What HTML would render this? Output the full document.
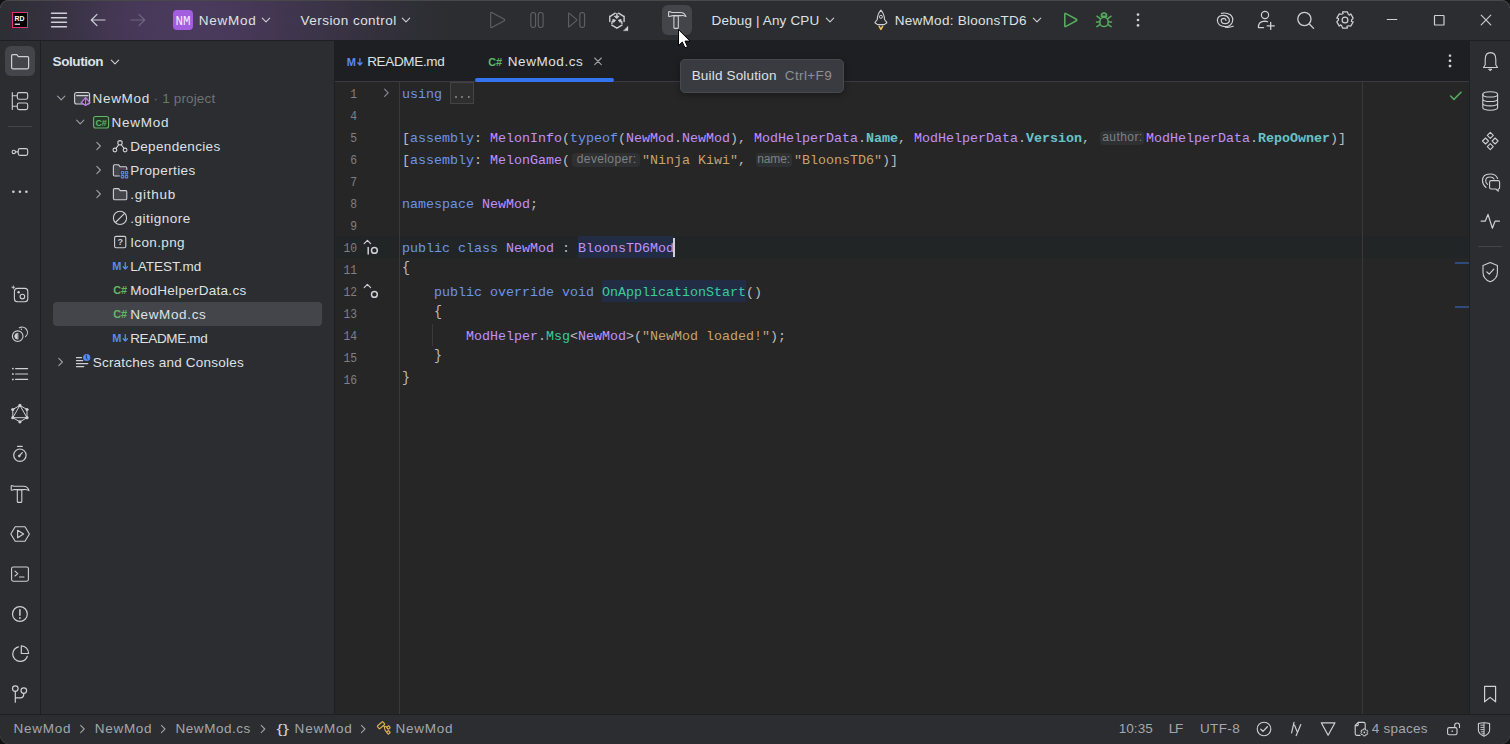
<!DOCTYPE html>
<html><head><meta charset='utf-8'><style>
*{margin:0;padding:0;box-sizing:border-box}
html,body{width:1510px;height:744px;overflow:hidden;background:#1E1F22}
body{position:relative;font-family:"Liberation Sans",sans-serif}
.b{position:absolute}
.t{position:absolute;white-space:pre;line-height:20px;font-family:"Liberation Sans",sans-serif}
.c{position:absolute;white-space:pre;line-height:22px;font-family:"Liberation Mono",monospace;font-size:13.333px;color:#BDBDBD}
.ln{position:absolute;white-space:pre;line-height:22px;font-family:"Liberation Mono",monospace;font-size:13.333px;color:#7E8085;text-align:right;transform:scaleX(0.85);transform-origin:100% 50%}
.kw{color:#6C95EB} .cls{color:#C191FF} .mth{color:#39CC9B} .str{color:#C9A26D} .prop{color:#66C3CC;font-weight:700} .txt{color:#BDBDBD}
.hint{position:absolute;height:14px;border-radius:4px;background:#2F3032}
.ic{position:absolute;left:0;top:0}
</style></head><body>
<div class='b' style='left:0px;top:0px;width:1510px;height:40px;background:#2B2D30;'></div><div class='b' style='left:0px;top:0px;width:700px;height:40px;background:linear-gradient(90deg, rgba(43,45,48,0.55) 0px, rgba(43,45,48,0) 110px), radial-gradient(ellipse 265px 180px at 190px 20px, rgba(114,74,150,0.46) 0%, rgba(114,74,150,0.40) 20%, rgba(114,74,150,0.26) 45%, rgba(114,74,150,0.11) 72%, rgba(114,74,150,0) 100%);'></div><div class='b' style='left:0px;top:40px;width:40px;height:674px;background:#2B2D30;'></div><div class='b' style='left:40px;top:40px;width:1px;height:674px;background:#1E1F22;'></div><div class='b' style='left:41px;top:40px;width:293px;height:674px;background:#2B2D30;'></div><div class='b' style='left:334px;top:40px;width:1px;height:674px;background:#1E1F22;'></div><div class='b' style='left:335px;top:40px;width:1135px;height:41px;background:#1E1F22;'></div><div class='b' style='left:335px;top:81px;width:1135px;height:1px;background:#393B40;'></div><div class='b' style='left:335px;top:82px;width:1135px;height:632px;background:#262626;'></div><div class='b' style='left:335px;top:236px;width:1135px;height:22px;background:#222526;'></div><div class='b' style='left:399px;top:82px;width:1px;height:632px;background:#393939;'></div><div class='b' style='left:1362px;top:82px;width:1px;height:632px;background:#393939;'></div><div class='b' style='left:450px;top:82px;width:24px;height:22px;background:#2E2E2E;border:1px solid #444;'></div><div class='b' style='left:578px;top:236px;width:96px;height:22px;background:#222C44;'></div><div class='b' style='left:602px;top:280px;width:144px;height:22px;background:#222C44;'></div><div class='b' style='left:673px;top:238px;width:2px;height:19px;background:#CED0D6;'></div><div class='b' style='left:432px;top:324px;width:1px;height:22px;background:#3A3A3A;'></div><div class='b' style='left:53px;top:302px;width:269px;height:24px;background:#43454A;border-radius:4px;'></div><div class='b' style='left:1470px;top:40px;width:40px;height:674px;background:#2B2D30;'></div><div class='b' style='left:1469px;top:40px;width:1px;height:674px;background:#1E1F22;'></div><div class='b' style='left:0px;top:40px;width:1510px;height:1px;background:#1E1F22;'></div><div class='b' style='left:0px;top:714px;width:1510px;height:30px;background:#2B2D30;'></div><div class='b' style='left:0px;top:714px;width:1510px;height:1px;background:#1E1F22;'></div><div class='b' style='left:680px;top:59px;width:164px;height:34px;background:#393B40;border:1px solid #48494E;border-radius:5px;box-shadow:0 2px 6px rgba(0,0,0,0.35);'></div>
<div class='hint' style='left:1100.0px;top:131px;width:44.0px'></div><div class='hint' style='left:572.0px;top:153px;width:68.0px'></div><div class='hint' style='left:756.0px;top:153px;width:36.0px'></div>
<div class='ln' style='top:84px;right:1153.3px'>1</div><div class='c kw' style='left:402.0px;top:84px'>using</div><div class='c txt' style='left:442.0px;top:84px'> </div><div class='ln' style='top:106px;right:1153.3px'>4</div><div class='ln' style='top:128px;right:1153.3px'>5</div><div class='c txt' style='left:402.0px;top:128px'>[</div><div class='c kw' style='left:410.0px;top:128px'>assembly</div><div class='c txt' style='left:474.0px;top:128px'>: </div><div class='c cls' style='left:490.0px;top:128px'>MelonInfo</div><div class='c txt' style='left:562.0px;top:128px'>(</div><div class='c kw' style='left:570.0px;top:128px'>typeof</div><div class='c txt' style='left:618.0px;top:128px'>(</div><div class='c cls' style='left:626.0px;top:128px'>NewMod</div><div class='c txt' style='left:674.0px;top:128px'>.</div><div class='c cls' style='left:682.0px;top:128px'>NewMod</div><div class='c txt' style='left:730.0px;top:128px'>), </div><div class='c cls' style='left:754.0px;top:128px'>ModHelperData</div><div class='c txt' style='left:858.0px;top:128px'>.</div><div class='c prop' style='left:866.0px;top:128px'>Name</div><div class='c txt' style='left:898.0px;top:128px'>, </div><div class='c cls' style='left:914.0px;top:128px'>ModHelperData</div><div class='c txt' style='left:1018.0px;top:128px'>.</div><div class='c prop' style='left:1026.0px;top:128px'>Version</div><div class='c txt' style='left:1082.0px;top:128px'>, </div><div class='c cls' style='left:1146.0px;top:128px'>ModHelperData</div><div class='c txt' style='left:1250.0px;top:128px'>.</div><div class='c prop' style='left:1258.0px;top:128px'>RepoOwner</div><div class='c txt' style='left:1330.0px;top:128px'>)]</div><div class='ln' style='top:150px;right:1153.3px'>6</div><div class='c txt' style='left:402.0px;top:150px'>[</div><div class='c kw' style='left:410.0px;top:150px'>assembly</div><div class='c txt' style='left:474.0px;top:150px'>: </div><div class='c cls' style='left:490.0px;top:150px'>MelonGame</div><div class='c txt' style='left:562.0px;top:150px'>(</div><div class='c str' style='left:642.0px;top:150px'>&quot;Ninja Kiwi&quot;</div><div class='c txt' style='left:738.0px;top:150px'>, </div><div class='c str' style='left:794.0px;top:150px'>&quot;BloonsTD6&quot;</div><div class='c txt' style='left:882.0px;top:150px'>)]</div><div class='ln' style='top:172px;right:1153.3px'>7</div><div class='ln' style='top:194px;right:1153.3px'>8</div><div class='c kw' style='left:402.0px;top:194px'>namespace</div><div class='c txt' style='left:474.0px;top:194px'> </div><div class='c cls' style='left:482.0px;top:194px'>NewMod</div><div class='c txt' style='left:530.0px;top:194px'>;</div><div class='ln' style='top:216px;right:1153.3px'>9</div><div class='ln' style='top:238px;right:1153.3px'>10</div><div class='c kw' style='left:402.0px;top:238px'>public</div><div class='c txt' style='left:450.0px;top:238px'> </div><div class='c kw' style='left:458.0px;top:238px'>class</div><div class='c txt' style='left:498.0px;top:238px'> </div><div class='c cls' style='left:506.0px;top:238px'>NewMod</div><div class='c txt' style='left:554.0px;top:238px'> : </div><div class='c cls' style='left:578.0px;top:238px'>BloonsTD6Mod</div><div class='ln' style='top:260px;right:1153.3px'>11</div><div class='c txt' style='left:402.0px;top:258px;transform:scaleY(1.12)'>{</div><div class='ln' style='top:282px;right:1153.3px'>12</div><div class='c txt' style='left:402.0px;top:282px'>    </div><div class='c kw' style='left:434.0px;top:282px'>public</div><div class='c txt' style='left:482.0px;top:282px'> </div><div class='c kw' style='left:490.0px;top:282px'>override</div><div class='c txt' style='left:554.0px;top:282px'> </div><div class='c kw' style='left:562.0px;top:282px'>void</div><div class='c txt' style='left:594.0px;top:282px'> </div><div class='c mth' style='left:602.0px;top:282px'>OnApplicationStart</div><div class='c txt' style='left:746.0px;top:282px'>()</div><div class='ln' style='top:304px;right:1153.3px'>13</div><div class='c txt' style='left:402.0px;top:304px'>    </div><div class='c txt' style='left:434.0px;top:302px;transform:scaleY(1.12)'>{</div><div class='ln' style='top:326px;right:1153.3px'>14</div><div class='c txt' style='left:402.0px;top:326px'>        </div><div class='c cls' style='left:466.0px;top:326px'>ModHelper</div><div class='c txt' style='left:538.0px;top:326px'>.</div><div class='c mth' style='left:546.0px;top:326px'>Msg</div><div class='c txt' style='left:570.0px;top:326px'>&lt;</div><div class='c cls' style='left:578.0px;top:326px'>NewMod</div><div class='c txt' style='left:626.0px;top:326px'>&gt;(</div><div class='c str' style='left:642.0px;top:326px'>&quot;NewMod loaded!&quot;</div><div class='c txt' style='left:770.0px;top:326px'>);</div><div class='ln' style='top:348px;right:1153.3px'>15</div><div class='c txt' style='left:402.0px;top:348px'>    </div><div class='c txt' style='left:434.0px;top:346px;transform:scaleY(1.12)'>}</div><div class='ln' style='top:370px;right:1153.3px'>16</div><div class='c txt' style='left:402.0px;top:368px;transform:scaleY(1.12)'>}</div>
<div class='t' style='left:198.8px;top:11px;font-size:13.5px;color:#DFE1E5;letter-spacing:0.744px'>NewMod</div><div class='t' style='left:300.6px;top:11px;font-size:13.5px;color:#DFE1E5;letter-spacing:0.449px'>Version control</div><div class='t' style='left:711.6px;top:11px;font-size:13.5px;color:#DFE1E5;letter-spacing:0.146px'>Debug | Any CPU</div><div class='t' style='left:894.8px;top:11px;font-size:13.5px;color:#DFE1E5;letter-spacing:0.265px'>NewMod: BloonsTD6</div><div class='t' style='left:52.6px;top:52px;font-size:13.5px;color:#DFE1E5;letter-spacing:-0.429px;font-weight:700'>Solution</div><div class='t' style='left:92.6px;top:89px;font-size:13.5px;color:#DFE1E5;letter-spacing:0.664px'>NewMod</div><div class='t' style='left:111.6px;top:113px;font-size:13.5px;color:#DFE1E5;letter-spacing:0.744px'>NewMod</div><div class='t' style='left:130.2px;top:137px;font-size:13.5px;color:#DFE1E5;letter-spacing:0.334px'>Dependencies</div><div class='t' style='left:130.2px;top:161px;font-size:13.5px;color:#DFE1E5;letter-spacing:0.385px'>Properties</div><div class='t' style='left:130.2px;top:185px;font-size:13.5px;color:#DFE1E5;letter-spacing:0.742px'>.github</div><div class='t' style='left:130.2px;top:209px;font-size:13.5px;color:#DFE1E5;letter-spacing:0.495px'>.gitignore</div><div class='t' style='left:130.2px;top:233px;font-size:13.5px;color:#DFE1E5;letter-spacing:0.372px'>Icon.png</div><div class='t' style='left:130.2px;top:257px;font-size:13.5px;color:#DFE1E5;letter-spacing:-0.004px'>LATEST.md</div><div class='t' style='left:130.2px;top:281px;font-size:13.5px;color:#DFE1E5;letter-spacing:0.280px'>ModHelperData.cs</div><div class='t' style='left:130.2px;top:305px;font-size:13.5px;color:#DFE1E5;letter-spacing:0.634px'>NewMod.cs</div><div class='t' style='left:130.2px;top:329px;font-size:13.5px;color:#DFE1E5;letter-spacing:-0.333px'>README.md</div><div class='t' style='left:92.7px;top:353px;font-size:13.5px;color:#DFE1E5;letter-spacing:0.222px'>Scratches and Consoles</div><div class='t' style='left:153.6px;top:89px;font-size:13.5px;color:#6F737A;letter-spacing:0.157px'>· 1 project</div><div class='t' style='left:367.2px;top:52px;font-size:13.5px;color:#DFE1E5;letter-spacing:-0.333px'>README.md</div><div class='t' style='left:507.8px;top:52px;font-size:13.5px;color:#DFE1E5;letter-spacing:0.559px'>NewMod.cs</div><div class='t' style='left:691.7px;top:66px;font-size:13.5px;color:#DFE1E5;letter-spacing:0.172px'>Build Solution</div><div class='t' style='left:784.8px;top:66px;font-size:13.5px;color:#8C9097;letter-spacing:0.377px'>Ctrl+F9</div><div class='t' style='left:13.6px;top:719px;font-size:13.5px;color:#A4A7AE;letter-spacing:0.744px'>NewMod</div><div class='t' style='left:94.8px;top:719px;font-size:13.5px;color:#A4A7AE;letter-spacing:0.704px'>NewMod</div><div class='t' style='left:175.6px;top:719px;font-size:13.5px;color:#A4A7AE;letter-spacing:0.509px'>NewMod.cs</div><div class='t' style='left:294.6px;top:719px;font-size:13.5px;color:#A4A7AE;letter-spacing:0.784px'>NewMod</div><div class='t' style='left:395.6px;top:719px;font-size:13.5px;color:#A4A7AE;letter-spacing:0.744px'>NewMod</div><div class='t' style='left:1118.7px;top:719px;font-size:13.5px;color:#A4A7AE;letter-spacing:0.076px'>10:35</div><div class='t' style='left:1168.8px;top:719px;font-size:13.5px;color:#A4A7AE;letter-spacing:-1.366px'>LF</div><div class='t' style='left:1199.9px;top:719px;font-size:13.5px;color:#A4A7AE;letter-spacing:0.387px'>UTF-8</div><div class='t' style='left:1371.8px;top:719px;font-size:13.5px;color:#A4A7AE;letter-spacing:0.236px'>4 spaces</div><div class='t' style='left:576.8px;top:149px;font-size:12px;color:#7D8087;letter-spacing:0.373px'>developer:</div><div class='t' style='left:757.2px;top:149px;font-size:12px;color:#7D8087;letter-spacing:-0.090px'>name:</div><div class='t' style='left:1102.2px;top:127px;font-size:12px;color:#7D8087;letter-spacing:0.440px'>author:</div>
<svg class='ic' width='1510' height='744' viewBox='0 0 1510 744'><rect x='12.5' y='12.5' width='15' height='15' rx='0' fill='#000' stroke='#E8317A' stroke-width='1'/><text x='14.4' y='20.8' font-family='Liberation Sans' font-size='7' font-weight='700' fill='#fff' text-anchor='start' textLength='10' lengthAdjust='spacingAndGlyphs'>RD</text><rect x='14.8' y='23.6' width='5.2' height='1.2' rx='0' fill='#fff' /><path d='M51.5,13.3 H66.5' fill='none' stroke='#CED0D6' stroke-width='1.4' stroke-linecap='round' stroke-linejoin='round' /><path d='M51.5,17.8 H66.5' fill='none' stroke='#CED0D6' stroke-width='1.4' stroke-linecap='round' stroke-linejoin='round' /><path d='M51.5,22.2 H66.5' fill='none' stroke='#CED0D6' stroke-width='1.4' stroke-linecap='round' stroke-linejoin='round' /><path d='M51.5,26.7 H66.5' fill='none' stroke='#CED0D6' stroke-width='1.4' stroke-linecap='round' stroke-linejoin='round' /><path d='M105,20 H91.5 M97,14.3 L91.3,20 L97,25.7' fill='none' stroke='#CED0D6' stroke-width='1.2' stroke-linecap='round' stroke-linejoin='round' /><path d='M131,20 H144.5 M139,14.3 L144.7,20 L139,25.7' fill='none' stroke='#6E6780' stroke-width='1.2' stroke-linecap='round' stroke-linejoin='round' /><rect x='173' y='10' width='20' height='20' rx='4' fill='#A35EE0' /><text x='175.4' y='25' font-family='Liberation Mono' font-size='13' font-weight='400' fill='#F4ECFB' text-anchor='start' textLength='15' lengthAdjust='spacingAndGlyphs'>NM</text><path d='M262.3,18.2 L266,21.9 L269.7,18.2' fill='none' stroke='#CED0D6' stroke-width='1.1' stroke-linecap='round' stroke-linejoin='round' /><path d='M402.3,18.2 L406,21.9 L409.7,18.2' fill='none' stroke='#CED0D6' stroke-width='1.1' stroke-linecap='round' stroke-linejoin='round' /><path d='M490.7,13.2 Q490.7,12 491.8,12.6 L504.3,19.3 Q505.2,20 504.3,20.7 L491.8,27.4 Q490.7,28 490.7,26.8 Z' fill='none' stroke='#5F6166' stroke-width='1.1' stroke-linecap='round' stroke-linejoin='round' /><rect x='530.8' y='12.5' width='4.8' height='15' rx='2.4' fill='none' stroke='#5F6166' stroke-width='1.1'/><rect x='538.3' y='12.5' width='4.8' height='15' rx='2.4' fill='none' stroke='#5F6166' stroke-width='1.1'/><path d='M568.6,13.6 Q568.6,12.6 569.4,13.3 L576.5,19.4 Q577.2,20 576.5,20.6 L569.4,26.7 Q568.6,27.4 568.6,26.4 Z' fill='none' stroke='#5F6166' stroke-width='1.1' stroke-linecap='round' stroke-linejoin='round' /><rect x='579.8' y='12.5' width='4.8' height='15' rx='2.4' fill='none' stroke='#5F6166' stroke-width='1.1'/><path d='M610.2,16.4 L615.2,13.2 M618.6,13.2 L623.7,16.4 M609.8,16.2 V21.6 M624.1,16.2 V21.6 M611.8,25.2 L616.9,28.2 L622,25.2' fill='none' stroke='#CED0D6' stroke-width='1.4' stroke-linecap='round' stroke-linejoin='round' /><path d='M616.9,13.6 V16.4' fill='none' stroke='#CED0D6' stroke-width='1.4' stroke-linecap='round' stroke-linejoin='round' /><path d='M614.6,16.2 H619.2 L616.9,18.4 Z' fill='#CED0D6' stroke='#CED0D6' stroke-width='0.8' stroke-linecap='round' stroke-linejoin='round' /><path d='M611.9,23.6 Q611.6,21.4 613.6,20.4 M622,23.6 Q622.3,21.4 620.3,20.4' fill='none' stroke='#CED0D6' stroke-width='1.4' stroke-linecap='round' stroke-linejoin='round' /><path d='M613.2,19.4 L615.6,20.2 L614,22.2 Z M620.7,19.4 L618.3,20.2 L619.9,22.2 Z' fill='#CED0D6' stroke='#CED0D6' stroke-width='0.8' stroke-linecap='round' stroke-linejoin='round' /><path d='M628,26.3 L628,30.8 L623.5,30.8 Z' fill='#CED0D6' stroke='#CED0D6' stroke-width='0.3' stroke-linecap='round' stroke-linejoin='round' /><rect x='662' y='5' width='30' height='30' rx='6' fill='#43454A' /><path d='M668.6,12.2 Q668.6,11.4 669.5,11.6 L671.5,12.2 Q672.2,12.5 673,12.5 H680.5 Q684.5,12.5 686,16.6 Q683.5,15.2 681.3,15.6 H673 Q672.2,15.6 671.5,15.9 L669.5,16.5 Q668.6,16.7 668.6,15.9 Z' fill='none' stroke='#CED0D6' stroke-width='1.1' stroke-linecap='round' stroke-linejoin='round' /><rect x='673.9' y='15.8' width='4.4' height='12.6' rx='1' fill='none' stroke='#CED0D6' stroke-width='1.1'/><path d='M880.9,10.2 Q877.3,14.5 877.3,19.5 L875.2,22.2 Q874.6,23 875.6,23.2 L877.6,24.6 H884.2 L886.2,23.2 Q887.2,23 886.6,22.2 L884.5,19.5 Q884.5,14.5 880.9,10.2 Z' fill='none' stroke='#CED0D6' stroke-width='1.1' stroke-linecap='round' stroke-linejoin='round' /><circle cx='880.9' cy='16.8' r='1.5' fill='none' stroke='#CED0D6' stroke-width='1'/><path d='M879.2,26.4 L880.9,29.4 L882.6,26.4' fill='none' stroke='#F2C55C' stroke-width='1.5' stroke-linecap='round' stroke-linejoin='round' /><path d='M1033.3,18.2 L1037,21.9 L1040.7,18.2' fill='none' stroke='#CED0D6' stroke-width='1.1' stroke-linecap='round' stroke-linejoin='round' /><path d='M826.3,18.2 L830,21.9 L833.7,18.2' fill='none' stroke='#CED0D6' stroke-width='1.1' stroke-linecap='round' stroke-linejoin='round' /><path d='M1064.8,14.2 Q1064.8,13 1066,13.6 L1076.3,19.2 Q1077.3,20 1076.3,20.8 L1066,26.4 Q1064.8,27 1064.8,25.8 Z' fill='none' stroke='#57AB5F' stroke-width='1.6' stroke-linecap='round' stroke-linejoin='round' /><path d='M1101.3,16.2 Q1101.3,12.9 1104,12.9 Q1106.7,12.9 1106.7,16.2 Z' fill='none' stroke='#57AB5F' stroke-width='1.5' stroke-linecap='round' stroke-linejoin='round' /><ellipse cx='1104' cy='21.9' rx='4.2' ry='4.7' fill='none' stroke='#57AB5F' stroke-width='1.5'/><path d='M1096.9,16.2 L1099.9,18.3 M1111.1,16.2 L1108.1,18.3 M1096.5,22 H1099.6 M1111.5,22 H1108.4 M1096.9,26.6 L1100,24.6 M1111.1,26.6 L1108,24.6' fill='none' stroke='#57AB5F' stroke-width='1.5' stroke-linecap='round' stroke-linejoin='round' /><circle cx='1138' cy='14.6' r='1.35' fill='#CED0D6' /><circle cx='1138' cy='20' r='1.35' fill='#CED0D6' /><circle cx='1138' cy='25.4' r='1.35' fill='#CED0D6' /><path d='M1221.5,13.4 Q1226,12.2 1230,14.6 Q1234,17.6 1232.2,22.4 Q1230,26.8 1224.5,26.6 Q1218,26.2 1217.4,20.8 Q1217.2,16.6 1221.4,15.6 Q1226.6,14.6 1229,18.6 Q1230.4,22.6 1226.2,23.6 Q1221.8,24.2 1221.2,20.6 Q1221.2,18.4 1224,18.4 Q1226,18.8 1226,20.4' fill='none' stroke='#CED0D6' stroke-width='1.2' stroke-linecap='round' stroke-linejoin='round' /><path d='M1225.6,27.2 Q1229.6,27.6 1233.2,26.2' fill='none' stroke='#CED0D6' stroke-width='1.2' stroke-linecap='round' stroke-linejoin='round' /><circle cx='1265' cy='15' r='3.6' fill='none' stroke='#CED0D6' stroke-width='1.2'/><path d='M1258.4,27.6 H1263.6 M1258.4,27.6 Q1258.3,21.4 1264.8,21.2 Q1266.6,21.2 1267.6,21.8' fill='none' stroke='#CED0D6' stroke-width='1.2' stroke-linecap='round' stroke-linejoin='round' /><path d='M1270.7,22.4 V29.4 M1267.2,25.9 H1274.3' fill='none' stroke='#CED0D6' stroke-width='1.3' stroke-linecap='round' stroke-linejoin='round' /><circle cx='1304.4' cy='19' r='6.6' fill='none' stroke='#CED0D6' stroke-width='1.3'/><path d='M1309.3,24 L1313.6,28.4' fill='none' stroke='#CED0D6' stroke-width='1.3' stroke-linecap='round' stroke-linejoin='round' /><polygon points='1342.54,11.97 1347.46,11.97 1348.30,14.28 1349.50,15.17 1350.73,13.86 1353.18,18.11 1351.60,20.00 1351.43,21.48 1353.18,21.89 1350.73,26.14 1348.30,25.72 1346.93,26.31 1347.46,28.03 1342.54,28.03 1341.70,25.72 1340.50,24.83 1339.27,26.14 1336.82,21.89 1338.40,20.00 1338.57,18.52 1336.82,18.11 1339.27,13.86 1341.70,14.28 1343.07,13.69' fill='none' stroke='#CED0D6' stroke-width='1.2' stroke-linejoin='round'/><circle cx='1345' cy='20' r='2.9' fill='none' stroke='#CED0D6' stroke-width='1.2'/><path d='M1387.2,19.5 H1396.8' fill='none' stroke='#CED0D6' stroke-width='1' stroke-linecap='round' stroke-linejoin='round' /><rect x='1434.5' y='15.5' width='9.5' height='9.5' rx='0.6' fill='none' stroke='#CED0D6' stroke-width='1.2'/><path d='M1481.2,15.2 L1490.8,24.8 M1490.8,15.2 L1481.2,24.8' fill='none' stroke='#CED0D6' stroke-width='1.1' stroke-linecap='round' stroke-linejoin='round' /><rect x='5' y='46' width='30' height='30' rx='6' fill='#43454A' /><path d='M11.6,55.800000000000004 Q11.6,54.6 12.799999999999999,54.6 H16.8 L18.4,56.6 H27.400000000000002 Q28.6,56.6 28.6,57.800000000000004 V67.6 Q28.6,68.8 27.400000000000002,68.8 H12.799999999999999 Q11.6,68.8 11.6,67.6 Z' fill='none' stroke='#CED0D6' stroke-width='1.2' stroke-linecap='round' stroke-linejoin='round' /><path d='M12.3,92.5 V109.5 M12.3,95.8 H16.8 M12.3,106.3 H16.8' fill='none' stroke='#CED0D6' stroke-width='1.1' stroke-linecap='round' stroke-linejoin='round' /><rect x='17.3' y='92.6' width='10.4' height='6.6' rx='1.8' fill='none' stroke='#CED0D6' stroke-width='1.1'/><rect x='17.3' y='103' width='10.4' height='6.6' rx='1.8' fill='none' stroke='#CED0D6' stroke-width='1.1'/><path d='M8.5,126.5 H31.5' fill='none' stroke='#43454A' stroke-width='1' stroke-linecap='round' stroke-linejoin='round' /><circle cx='13.8' cy='151.9' r='1.7' fill='none' stroke='#CED0D6' stroke-width='1.1'/><path d='M15.5,151.9 H18' fill='none' stroke='#CED0D6' stroke-width='1.1' stroke-linecap='round' stroke-linejoin='round' /><rect x='18.2' y='148.6' width='9.5' height='6.8' rx='1.8' fill='none' stroke='#CED0D6' stroke-width='1.1'/><circle cx='13.4' cy='191.8' r='1.3' fill='#CED0D6' /><circle cx='19.9' cy='191.8' r='1.3' fill='#CED0D6' /><circle cx='26.4' cy='191.8' r='1.3' fill='#CED0D6' /><rect x='14.4' y='288.4' width='13.4' height='13.4' rx='3' fill='none' stroke='#CED0D6' stroke-width='1.1'/><circle cx='18.6' cy='292.3' r='1.2' fill='#CED0D6' /><circle cx='22.4' cy='296.6' r='2.3' fill='none' stroke='#CED0D6' stroke-width='1.1'/><path d='M13.3,285.9 V288.7 M11.9,287.3 H14.7' fill='none' stroke='#CED0D6' stroke-width='0.9' stroke-linecap='round' stroke-linejoin='round' /><circle cx='17.7' cy='336.2' r='5.3' fill='none' stroke='#CED0D6' stroke-width='1.1'/><path d='M17.7,333.2 A3,3 0 0 0 17.7,339.2 Z' fill='#CED0D6' stroke='#CED0D6' stroke-width='0.6' stroke-linecap='round' stroke-linejoin='round' /><path d='M19.3,327.8 A5.4,5.4 0 0 1 25.5,336.6' fill='none' stroke='#CED0D6' stroke-width='1.1' stroke-linecap='round' stroke-linejoin='round' /><circle cx='21.4' cy='329.2' r='0.7' fill='#CED0D6' /><circle cx='12.9' cy='368.6' r='0.9' fill='#CED0D6' /><path d='M15.6,368.6 H27.6' fill='none' stroke='#CED0D6' stroke-width='1.2' stroke-linecap='round' stroke-linejoin='round' /><circle cx='12.9' cy='374' r='0.9' fill='#CED0D6' /><path d='M15.6,374 H27.6' fill='none' stroke='#CED0D6' stroke-width='1.2' stroke-linecap='round' stroke-linejoin='round' /><circle cx='12.9' cy='379.4' r='0.9' fill='#CED0D6' /><path d='M15.6,379.4 H27.6' fill='none' stroke='#CED0D6' stroke-width='1.2' stroke-linecap='round' stroke-linejoin='round' /><polygon points='19.90,405.40 27.00,409.50 27.00,417.70 19.90,421.80 12.80,417.70 12.80,409.50' fill='none' stroke='#CED0D6' stroke-width='1' /><polygon points='19.90,405.40 27.00,417.70 12.80,417.70' fill='none' stroke='#CED0D6' stroke-width='1' /><circle cx='19.9' cy='405.4' r='1.6' fill='#CED0D6' /><circle cx='27.0' cy='409.5' r='1.6' fill='#CED0D6' /><circle cx='27.0' cy='417.7' r='1.6' fill='#CED0D6' /><circle cx='19.9' cy='421.8' r='1.6' fill='#CED0D6' /><circle cx='12.8' cy='417.7' r='1.6' fill='#CED0D6' /><circle cx='12.8' cy='409.5' r='1.6' fill='#CED0D6' /><circle cx='19.9' cy='455.2' r='6.2' fill='none' stroke='#CED0D6' stroke-width='1.2'/><path d='M17.6,446.4 H22.2' fill='none' stroke='#CED0D6' stroke-width='1.2' stroke-linecap='round' stroke-linejoin='round' /><path d='M19.2,456 L22.3,452.6' fill='none' stroke='#CED0D6' stroke-width='1.2' stroke-linecap='round' stroke-linejoin='round' /><circle cx='19.3' cy='456.0' r='1.2' fill='#CED0D6' /><path d='M11.2,486.4 Q11.2,485.5 12.2,485.7 L14,486.3 H23.5 Q27.8,486.3 29,490.6 Q26.2,489.2 23.8,489.6 H14 L12.2,490.2 Q11.2,490.4 11.2,489.5 Z' fill='none' stroke='#CED0D6' stroke-width='1.1' stroke-linecap='round' stroke-linejoin='round' /><rect x='17.3' y='489.8' width='4.5' height='12.6' rx='1' fill='none' stroke='#CED0D6' stroke-width='1.1'/><polygon points='10.8,534 15.2,526.8 25,526.8 29.4,534 25,541.2 15.2,541.2' fill='none' stroke='#CED0D6' stroke-width='1.1' stroke-linejoin='round'/><path d='M17.6,530.3 L17.6,537.7 L23.6,534 Z' fill='none' stroke='#CED0D6' stroke-width='1.1' stroke-linecap='round' stroke-linejoin='round' /><rect x='11.6' y='567' width='16.8' height='14.2' rx='1.6' fill='none' stroke='#CED0D6' stroke-width='1.1'/><path d='M15,571.2 L17.8,573.6 L15,576 M19.5,577 H24' fill='none' stroke='#CED0D6' stroke-width='1.1' stroke-linecap='round' stroke-linejoin='round' /><circle cx='19.9' cy='614' r='7.4' fill='none' stroke='#CED0D6' stroke-width='1.2'/><path d='M19.9,609.8 V615.2' fill='none' stroke='#CED0D6' stroke-width='1.5' stroke-linecap='round' stroke-linejoin='round' /><circle cx='19.9' cy='618' r='0.9' fill='#CED0D6' /><path d='M18.4,646.8 A7.4,7.4 0 1 0 27.3,656.2' fill='none' stroke='#CED0D6' stroke-width='1.2' stroke-linecap='round' stroke-linejoin='round' /><path d='M21.3,645.8 V653.5 H28.6 A7.6,7.6 0 0 0 21.3,645.8 Z' fill='none' stroke='#CED0D6' stroke-width='1.2' stroke-linecap='round' stroke-linejoin='round' /><circle cx='15.3' cy='688.6' r='2.8' fill='none' stroke='#CED0D6' stroke-width='1.2'/><circle cx='23.8' cy='690.6' r='2.8' fill='none' stroke='#CED0D6' stroke-width='1.2'/><path d='M15.3,691.4 V702.2 M15.3,697.8 H20.4 Q23.8,697.8 23.8,693.4' fill='none' stroke='#CED0D6' stroke-width='1.2' stroke-linecap='round' stroke-linejoin='round' /><path d='M111.3,60.2 L115,63.9 L118.7,60.2' fill='none' stroke='#CED0D6' stroke-width='1.1' stroke-linecap='round' stroke-linejoin='round' /><path d='M57.6,96.2 L61.2,99.8 L64.8,96.2' fill='none' stroke='#9DA0A8' stroke-width='1.1' stroke-linecap='round' stroke-linejoin='round' /><path d='M76.60000000000001,120.2 L80.2,123.8 L83.8,120.2' fill='none' stroke='#9DA0A8' stroke-width='1.1' stroke-linecap='round' stroke-linejoin='round' /><path d='M96.8,142.4 L100.39999999999999,146 L96.8,149.6' fill='none' stroke='#9DA0A8' stroke-width='1.1' stroke-linecap='round' stroke-linejoin='round' /><path d='M96.8,166.4 L100.39999999999999,170 L96.8,173.6' fill='none' stroke='#9DA0A8' stroke-width='1.1' stroke-linecap='round' stroke-linejoin='round' /><path d='M96.8,190.4 L100.39999999999999,194 L96.8,197.6' fill='none' stroke='#9DA0A8' stroke-width='1.1' stroke-linecap='round' stroke-linejoin='round' /><path d='M58.800000000000004,358.4 L62.4,362 L58.800000000000004,365.6' fill='none' stroke='#9DA0A8' stroke-width='1.1' stroke-linecap='round' stroke-linejoin='round' /><rect x='74.6' y='92.5' width='15' height='11.5' rx='2' fill='#43454A' stroke='#CED0D6' stroke-width='1.1'/><path d='M76.6,95.6 H88' fill='none' stroke='#CED0D6' stroke-width='1.1' stroke-linecap='round' stroke-linejoin='round' /><path d='M85.6,97.6 L81.2,102.6 L85.6,105.4 L90,102.6 Z' fill='#2B2D30' stroke='#B77FEA' stroke-width='1.3' stroke-linecap='round' stroke-linejoin='round' /><path d='M85.6,98.4 V104.8' fill='none' stroke='#B77FEA' stroke-width='1.1' stroke-linecap='round' stroke-linejoin='round' /><rect x='93.6' y='116.5' width='15' height='11.5' rx='2' fill='#26382A' stroke='#5FB865' stroke-width='1.1'/><text x='95.4' y='125.6' font-family='Liberation Sans' font-size='8.4' font-weight='700' fill='#5FB865' text-anchor='start' textLength='11.4' lengthAdjust='spacingAndGlyphs'>C#</text><circle cx='120' cy='142.8' r='2.2' fill='none' stroke='#CED0D6' stroke-width='1.1'/><circle cx='114.9' cy='150' r='1.9' fill='none' stroke='#CED0D6' stroke-width='1.1'/><circle cx='125.1' cy='150' r='1.9' fill='none' stroke='#CED0D6' stroke-width='1.1'/><path d='M118.8,144.7 L116,148.3 M121.2,144.7 L124,148.3' fill='none' stroke='#CED0D6' stroke-width='1.1' stroke-linecap='round' stroke-linejoin='round' /><path d='M113.4,166.0 Q113.4,164.8 114.60000000000001,164.8 H118.60000000000001 L120.2,166.8 H125.60000000000001 Q126.80000000000001,166.8 126.80000000000001,168.0 V174.8 Q126.80000000000001,176.0 125.60000000000001,176.0 H114.60000000000001 Q113.4,176.0 113.4,174.8 Z' fill='#43454A' stroke='#CED0D6' stroke-width='1.1' stroke-linecap='round' stroke-linejoin='round' /><rect x='119.8' y='170' width='9.4' height='9' rx='0' fill='#2B2D30' /><rect x='121.3' y='171.5' width='2.4' height='2.4' rx='0.3' fill='none' stroke='#548AF7' stroke-width='1.1'/><rect x='121.3' y='175.5' width='2.4' height='2.4' rx='0.3' fill='none' stroke='#548AF7' stroke-width='1.1'/><rect x='125.3' y='171.5' width='2.4' height='2.4' rx='0.3' fill='none' stroke='#548AF7' stroke-width='1.1'/><rect x='125.3' y='175.5' width='2.4' height='2.4' rx='0.3' fill='none' stroke='#548AF7' stroke-width='1.1'/><path d='M113.4,189.79999999999998 Q113.4,188.6 114.60000000000001,188.6 H118.60000000000001 L120.2,190.6 H125.60000000000001 Q126.80000000000001,190.6 126.80000000000001,191.79999999999998 V198.6 Q126.80000000000001,199.79999999999998 125.60000000000001,199.79999999999998 H114.60000000000001 Q113.4,199.79999999999998 113.4,198.6 Z' fill='#43454A' stroke='#CED0D6' stroke-width='1.1' stroke-linecap='round' stroke-linejoin='round' /><circle cx='120' cy='217.9' r='6.6' fill='none' stroke='#CED0D6' stroke-width='1.1'/><path d='M115.4,222.5 L124.6,213.3' fill='none' stroke='#CED0D6' stroke-width='1.1' stroke-linecap='round' stroke-linejoin='round' /><rect x='114.6' y='236.4' width='11.2' height='11.4' rx='1.5' fill='none' stroke='#CED0D6' stroke-width='1.1'/><text x='117.5' y='245.4' font-family='Liberation Sans' font-size='9' font-weight='700' fill='#CED0D6' text-anchor='start'>?</text><text x='112.2' y='269.6' font-family='Liberation Sans' font-size='10' font-weight='700' fill='#548AF7' text-anchor='start' textLength='9.2' lengthAdjust='spacingAndGlyphs'>M</text><path d='M125.30000000000001,262.6 V269.0 M123.2,266.8 L125.30000000000001,269.0 L127.4,266.8' fill='none' stroke='#548AF7' stroke-width='1.3' stroke-linecap='round' stroke-linejoin='round' /><text x='112.2' y='341.6' font-family='Liberation Sans' font-size='10' font-weight='700' fill='#548AF7' text-anchor='start' textLength='9.2' lengthAdjust='spacingAndGlyphs'>M</text><path d='M125.30000000000001,334.6 V341.0 M123.2,338.8 L125.30000000000001,341.0 L127.4,338.8' fill='none' stroke='#548AF7' stroke-width='1.3' stroke-linecap='round' stroke-linejoin='round' /><text x='346.8' y='65.6' font-family='Liberation Sans' font-size='10' font-weight='700' fill='#548AF7' text-anchor='start' textLength='9.2' lengthAdjust='spacingAndGlyphs'>M</text><path d='M359.9,58.599999999999994 V65.0 M357.8,62.8 L359.9,65.0 L362,62.8' fill='none' stroke='#548AF7' stroke-width='1.3' stroke-linecap='round' stroke-linejoin='round' /><text x='113.2' y='294.4' font-family='Liberation Sans' font-size='10' font-weight='700' fill='#5FB865' text-anchor='start' textLength='14' lengthAdjust='spacingAndGlyphs'>C#</text><text x='113.2' y='318.4' font-family='Liberation Sans' font-size='10' font-weight='700' fill='#5FB865' text-anchor='start' textLength='14' lengthAdjust='spacingAndGlyphs'>C#</text><text x='488.2' y='65.6' font-family='Liberation Sans' font-size='10' font-weight='700' fill='#5FB865' text-anchor='start' textLength='14' lengthAdjust='spacingAndGlyphs'>C#</text><path d='M76.4,357.6 H81.6' fill='none' stroke='#CED0D6' stroke-width='1.1' stroke-linecap='round' stroke-linejoin='round' /><path d='M76.4,360.6 H82.8' fill='none' stroke='#CED0D6' stroke-width='1.1' stroke-linecap='round' stroke-linejoin='round' /><path d='M76.4,363.6 H87.8' fill='none' stroke='#CED0D6' stroke-width='1.1' stroke-linecap='round' stroke-linejoin='round' /><path d='M76.4,366.6 H83.8' fill='none' stroke='#CED0D6' stroke-width='1.1' stroke-linecap='round' stroke-linejoin='round' /><circle cx='86.7' cy='357.5' r='3.6' fill='#548AF7' /><path d='M86.3,355.3 V358.2 L87.5,359' fill='none' stroke='#2B2D30' stroke-width='0.9' stroke-linecap='round' stroke-linejoin='round' /><path d='M594.7,58 L601.3,64.6 M601.3,58 L594.7,64.6' fill='none' stroke='#9DA0A8' stroke-width='1.1' stroke-linecap='round' stroke-linejoin='round' /><rect x='1448.8' y='54.4' width='2.4' height='2.4' rx='0.5' fill='#CED0D6' /><rect x='1448.8' y='59.599999999999994' width='2.4' height='2.4' rx='0.5' fill='#CED0D6' /><rect x='1448.8' y='64.8' width='2.4' height='2.4' rx='0.5' fill='#CED0D6' /><rect x='475' y='78' width='139' height='4' rx='2' fill='#3574F0' /><path d='M384.6,89.2 L388.2,92.8 L384.6,96.4' fill='none' stroke='#8C8F94' stroke-width='1.1' stroke-linecap='round' stroke-linejoin='round' /><path d='M364.2,243.6 L367.4,240.4 L370.6,243.6' fill='none' stroke='#CED0D6' stroke-width='1.2' stroke-linecap='round' stroke-linejoin='round' /><path d='M368.2,247.6 V254' fill='none' stroke='#CED0D6' stroke-width='1.5' stroke-linecap='round' stroke-linejoin='round' /><circle cx='374.4' cy='250.4' r='2.9' fill='none' stroke='#CED0D6' stroke-width='1.5'/><path d='M364.2,287.6 L367.4,284.4 L370.6,287.6' fill='none' stroke='#CED0D6' stroke-width='1.2' stroke-linecap='round' stroke-linejoin='round' /><circle cx='374.4' cy='294.4' r='2.9' fill='none' stroke='#CED0D6' stroke-width='1.5'/><path d='M1450.6,96 L1454,99.4 L1461,92.2' fill='none' stroke='#55A85E' stroke-width='1.6' stroke-linecap='round' stroke-linejoin='round' /><rect x='1455' y='262' width='14' height='2' rx='0' fill='#2F4B7C' /><rect x='1455' y='306' width='14' height='2' rx='0' fill='#2F4B7C' /><path d='M1483.5,67.5 H1497.5 L1495.8,64.8 V59.5 Q1495.8,52.6 1490.5,52.6 Q1485.2,52.6 1485.2,59.5 V64.8 Z' fill='none' stroke='#CED0D6' stroke-width='1.1' stroke-linecap='round' stroke-linejoin='round' /><path d='M1489,69.2 H1492 L1490.5,70.6 Z' fill='#CED0D6' stroke='#CED0D6' stroke-width='1' stroke-linecap='round' stroke-linejoin='round' /><ellipse cx='1490.2' cy='94.4' rx='7.4' ry='2.6' fill='none' stroke='#CED0D6' stroke-width='1.1'/><path d='M1482.8,94.4 V107.6 Q1482.8,110.2 1490.2,110.2 Q1497.6,110.2 1497.6,107.6 V94.4 M1482.8,98.9 Q1482.8,101.5 1490.2,101.5 Q1497.6,101.5 1497.6,98.9 M1482.8,103.3 Q1482.8,105.9 1490.2,105.9 Q1497.6,105.9 1497.6,103.3' fill='none' stroke='#CED0D6' stroke-width='1.1' stroke-linecap='round' stroke-linejoin='round' /><path d='M1490.3,132.4 L1493.3,135.4 L1490.3,138.4 L1487.3,135.4 Z' fill='none' stroke='#CED0D6' stroke-width='1.1' stroke-linecap='round' stroke-linejoin='round' /><path d='M1485.5,138 L1488.5,141 L1485.5,144 L1482.5,141 Z' fill='none' stroke='#CED0D6' stroke-width='1.1' stroke-linecap='round' stroke-linejoin='round' /><path d='M1495.1,138 L1498.1,141 L1495.1,144 L1492.1,141 Z' fill='none' stroke='#CED0D6' stroke-width='1.1' stroke-linecap='round' stroke-linejoin='round' /><path d='M1490.3,143.6 L1493.3,146.6 L1490.3,149.6 L1487.3,146.6 Z' fill='none' stroke='#CED0D6' stroke-width='1.1' stroke-linecap='round' stroke-linejoin='round' /><path d='M1486,187.5 Q1482.5,184.5 1482.5,180.8 Q1482.5,174 1490,174 Q1496,174 1497.6,178.5 M1487.6,184.4 Q1485.7,183 1485.7,180.8 Q1485.7,177 1490,177 Q1493,177 1494.1,179' fill='none' stroke='#CED0D6' stroke-width='1.1' stroke-linecap='round' stroke-linejoin='round' /><path d='M1489.6,182.2 Q1489.6,180.6 1491.2,180.6 H1498.2 Q1499.6,180.6 1499.6,182.2 V187.4 Q1499.6,189 1498.2,189 V191.2 L1495.8,189 H1491.2 Q1489.6,189 1489.6,187.4 Z' fill='none' stroke='#CED0D6' stroke-width='1.1' stroke-linecap='round' stroke-linejoin='round' /><path d='M1481.2,221.2 H1485.2 L1488,214.4 L1492.4,228.2 L1495,221.2 H1499.4' fill='none' stroke='#CED0D6' stroke-width='1.2' stroke-linecap='round' stroke-linejoin='round' /><path d='M1478.5,246.5 H1501.5' fill='none' stroke='#43454A' stroke-width='1' stroke-linecap='round' stroke-linejoin='round' /><path d='M1490.2,262.6 L1497.4,265.4 V272.4 Q1497.4,278.8 1490.2,281.8 Q1483,278.8 1483,272.4 V265.4 Z' fill='none' stroke='#CED0D6' stroke-width='1.1' stroke-linecap='round' stroke-linejoin='round' /><path d='M1486.8,271.8 L1489.2,274.2 L1493.8,269.2' fill='none' stroke='#CED0D6' stroke-width='1.2' stroke-linecap='round' stroke-linejoin='round' /><path d='M1484.6,686.4 H1495.6 V701.8 L1490.1,697.4 L1484.6,701.8 Z' fill='none' stroke='#CED0D6' stroke-width='1.2' stroke-linecap='round' stroke-linejoin='round' /><path d='M80.6,725.4 L84.19999999999999,729 L80.6,732.6' fill='none' stroke='#9DA0A8' stroke-width='1.1' stroke-linecap='round' stroke-linejoin='round' /><path d='M161.4,725.4 L165.0,729 L161.4,732.6' fill='none' stroke='#9DA0A8' stroke-width='1.1' stroke-linecap='round' stroke-linejoin='round' /><path d='M261.2,725.4 L264.8,729 L261.2,732.6' fill='none' stroke='#9DA0A8' stroke-width='1.1' stroke-linecap='round' stroke-linejoin='round' /><path d='M361.4,725.4 L365.0,729 L361.4,732.6' fill='none' stroke='#9DA0A8' stroke-width='1.1' stroke-linecap='round' stroke-linejoin='round' /><text x='276.6' y='733' font-family='Liberation Sans' font-size='13' font-weight='400' fill='#CED0D6' text-anchor='start' textLength='12.4' lengthAdjust='spacingAndGlyphs'>{}</text><rect x='-3.6' y='-1.8' width='7.2' height='3.6' rx='0.7' fill='none' stroke='#D9AE4F' stroke-width='1.2' transform='translate(381,725.2) rotate(-40)'/><rect x='-1.3' y='-1.3' width='2.6' height='2.6' rx='0.4' fill='none' stroke='#D9AE4F' stroke-width='1.2' transform='translate(388.4,727.5) rotate(-40)'/><rect x='-1.3' y='-1.3' width='2.6' height='2.6' rx='0.4' fill='none' stroke='#D9AE4F' stroke-width='1.2' transform='translate(388.4,732.4) rotate(-40)'/><path d='M383.4,726 L386.8,727 M384.4,726.4 Q384.6,731 386.8,731.8' fill='none' stroke='#D9AE4F' stroke-width='1.1' stroke-linecap='round' stroke-linejoin='round' /><circle cx='1264' cy='729' r='6.8' fill='none' stroke='#CED0D6' stroke-width='1.1'/><path d='M1260.8,729.2 L1263,731.4 L1267.4,726.8' fill='none' stroke='#CED0D6' stroke-width='1.3' stroke-linecap='round' stroke-linejoin='round' /><path d='M1294,722.4 L1291.6,732.8 M1294.6,725.2 L1297,731.4 M1300.8,724.6 L1296.2,735.6' fill='none' stroke='#CED0D6' stroke-width='1.2' stroke-linecap='round' stroke-linejoin='round' /><path d='M1321.3,722.8 H1335 L1328.1,735.2 Z' fill='none' stroke='#CED0D6' stroke-width='1.2' stroke-linecap='round' stroke-linejoin='round' /><path d='M1360,735.4 H1356.8 Q1355.2,735.4 1355.2,733.8 V725.4 L1358.2,722.4 H1363.6 Q1365.2,722.4 1365.2,724 V728.4 M1355.4,725.6 H1357.4 Q1358.2,725.6 1358.2,724.8 V722.6' fill='none' stroke='#CED0D6' stroke-width='1.1' stroke-linecap='round' stroke-linejoin='round' /><polygon points='1363.37,728.92 1365.23,728.92 1365.65,730.06 1366.21,730.49 1366.85,729.85 1367.78,731.47 1367.00,732.40 1366.91,733.10 1367.78,733.33 1366.85,734.95 1365.65,734.74 1365.00,735.01 1365.23,735.88 1363.37,735.88 1362.95,734.74 1362.39,734.31 1361.75,734.95 1360.82,733.33 1361.60,732.40 1361.69,731.70 1360.82,731.47 1361.75,729.85 1362.95,730.06 1363.60,729.79' fill='#2B2D30' stroke='#CED0D6' stroke-width='1' stroke-linejoin='round'/><circle cx='1364.3' cy='732.4' r='0.9' fill='#CED0D6' /><rect x='1447.6' y='727.6' width='9.4' height='7.2' rx='1.6' fill='none' stroke='#CED0D6' stroke-width='1.1'/><path d='M1454.7,727.4 V725.2 Q1454.7,723 1457.1,723 Q1459.5,723 1459.5,725.2 V727.4' fill='none' stroke='#CED0D6' stroke-width='1.1' stroke-linecap='round' stroke-linejoin='round' /><rect x='1451.6' y='730.4' width='1.2' height='1.6' rx='0' fill='#CED0D6' /><path d='M1478.4,723.6 Q1484,721.8 1489.6,723.6 V730 Q1489.6,733.8 1484,736.2 Q1478.4,733.8 1478.4,730 Z' fill='none' stroke='#CED0D6' stroke-width='1.1' stroke-linecap='round' stroke-linejoin='round' /><path d='M1484,723.2 V735.6 M1480.8,725.2 H1484 M1480.8,727.4 H1484 M1480.8,729.6 H1484 M1481.2,731.8 H1484 M1482.2,733.8 H1484' fill='none' stroke='#CED0D6' stroke-width='0.9' stroke-linecap='round' stroke-linejoin='round' /><path d='M0,0 H8 A8,8 0 0 0 0,8 Z' fill='#111'/><path d='M1510,0 H1502 A8,8 0 0 1 1510,8 Z' fill='#111'/><path d='M0,744 H8 A8,8 0 0 1 0,736 Z' fill='#111'/><path d='M1510,744 H1502 A8,8 0 0 0 1510,736 Z' fill='#111'/><path d='M0.5,8 A7.5,7.5 0 0 1 8,0.5 H1502 A7.5,7.5 0 0 1 1509.5,8' fill='none' stroke='#48484A' stroke-width='1'/><path d='M0.5,736 A7.5,7.5 0 0 0 8,743.5 M1502,743.5 A7.5,7.5 0 0 0 1509.5,736' fill='none' stroke='#3A3A3C' stroke-width='1'/><path d='M678.5,29.6 L678.5,45.6 L682.3,42 L685,47.8 L687.6,46.7 L685,41.1 L690,41.1 Z' fill='#fff' stroke='#000' stroke-width='1' stroke-linejoin='round'/><circle cx='456' cy='96.9' r='1' fill='#8C8C8C'/><circle cx='462' cy='96.9' r='1' fill='#8C8C8C'/><circle cx='468.8' cy='96.9' r='1' fill='#8C8C8C'/></svg>
</body></html>
